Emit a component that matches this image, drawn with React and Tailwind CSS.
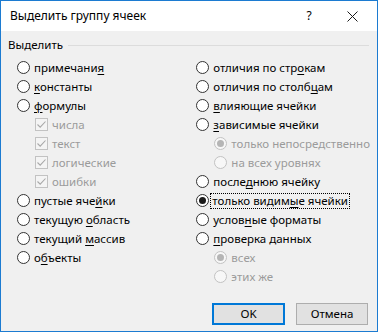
import React from 'react';

const font = { fontFamily: '"Noto Sans", "Liberation Sans", sans-serif' };

function Label({ text, u }) {
  // u = index of the access-key letter
  if (u === undefined) return <span>{text}</span>;
  return (
    <span>
      {text.slice(0, u)}
      <span className="underline underline-offset-2">{text[u]}</span>
      {text.slice(u + 1)}
    </span>
  );
}

function Radio({ checked, disabled }) {
  return (
    <span
      className={`w-[13px] h-[13px] rounded-full border flex items-center justify-center shrink-0 ${
        disabled ? 'border-[#c2c2c2] bg-[#f7f7f7]' : 'border-[#333333] bg-white'
      }`}
    >
      {checked && (
        <span className={`w-[7px] h-[7px] rounded-full ${disabled ? 'bg-[#b5b5b5]' : 'bg-[#1a1a1a]'}`} />
      )}
    </span>
  );
}

function Check() {
  return (
    <span className="w-[13px] h-[13px] border border-[#c2c2c2] bg-[#f4f4f4] flex items-center justify-center shrink-0">
      <svg width="11" height="11" viewBox="0 0 11 11">
        <path d="M1.5 5.5 L4.2 8.2 L9.5 2.5" fill="none" stroke="#a8a8a8" strokeWidth="1.1" />
      </svg>
    </span>
  );
}

function Row({ text, u, indent, checked, disabled, box, focus }) {
  return (
    <div className={`flex items-center h-[19px] gap-[4px] whitespace-nowrap ${indent ? 'pl-[18px]' : ''}`}>
      {box ? <Check /> : <Radio checked={checked} disabled={disabled} />}
      <span
        className={`leading-[14px] ${disabled ? 'text-[#9b9b9b]' : 'text-black'} ${
          focus ? 'outline outline-1 outline-dotted outline-black -ml-[2px] px-[1px]' : ''
        }`}
      >
        <Label text={text} u={u} />
      </span>
    </div>
  );
}

const left = [
  { text: 'примечания', u: 9 },
  { text: 'константы', u: 0 },
  { text: 'формулы', u: 0 },
  { text: 'числа', indent: true, box: true, disabled: true },
  { text: 'текст', indent: true, box: true, disabled: true },
  { text: 'логические', indent: true, box: true, disabled: true },
  { text: 'ошибки', indent: true, box: true, disabled: true },
  { text: 'пустые ячейки', u: 10 },
  { text: 'текущую область', u: 8 },
  { text: 'текущий массив', u: 8 },
  { text: 'объекты', u: 1 },
];

const right = [
  { text: 'отличия по строкам', u: 14 },
  { text: 'отличия по столбцам', u: 16 },
  { text: 'влияющие ячейки', u: 0 },
  { text: 'зависимые ячейки', u: 0 },
  { text: 'только непосредственно', indent: true, disabled: true, checked: true },
  { text: 'на всех уровнях', indent: true, disabled: true },
  { text: 'последнюю ячейку', u: 5 },
  { text: 'только видимые ячейки', u: 12, checked: true, focus: true },
  { text: 'условные форматы', u: 5 },
  { text: 'проверка данных', u: 0 },
  { text: 'всех', indent: true, disabled: true, checked: true },
  { text: 'этих же', indent: true, disabled: true },
];

export default function App() {
  return (
    <div style={font} className="w-[378px] h-[332px] border border-[#1c7bd1] flex flex-col text-[11.5px] bg-[#f0f0f0]">
      {/* TITLE BAR */}
      <div className="h-[30px] bg-white flex items-center pl-[9px] pr-[2px] shrink-0 text-[12px]">
        <div className="flex-1 text-black">Выделить группу ячеек</div>
        <div className="w-[16px] text-center text-black mr-[12px]">?</div>
        <div className="w-[46px] flex items-center justify-center">
          <svg width="11" height="11" viewBox="0 0 11 11">
            <path d="M0.5 0.5 L10.5 10.5 M10.5 0.5 L0.5 10.5" stroke="#1a1a1a" strokeWidth="1" />
          </svg>
        </div>
      </div>

      {/* BODY */}
      <div className="flex-1 flex flex-col px-[7px]">
        <div className="flex items-center gap-[5px] h-[14px] mt-[7px]">
          <span className="text-black">Выделить</span>
          <div className="flex-1 h-px bg-[#dcdcdc] mr-[1px]" />
        </div>

        <div className="flex mt-[6px] pl-[9px]">
          <div className="w-[180px] flex flex-col">
            {left.map(r => <Row key={r.text} {...r} />)}
          </div>
          <div className="flex-1 flex flex-col">
            {right.map(r => <Row key={r.text} {...r} />)}
          </div>
        </div>

        <div className="flex justify-end gap-[11px] mt-[17px] pr-[2px]">
          <button className="w-[73px] h-[22px] border-2 border-[#0078d7] bg-[#e1e1e1] text-black">OK</button>
          <button className="w-[72px] h-[22px] border border-[#adadad] bg-[#e1e1e1] text-black">Отмена</button>
        </div>
      </div>
    </div>
  );
}
